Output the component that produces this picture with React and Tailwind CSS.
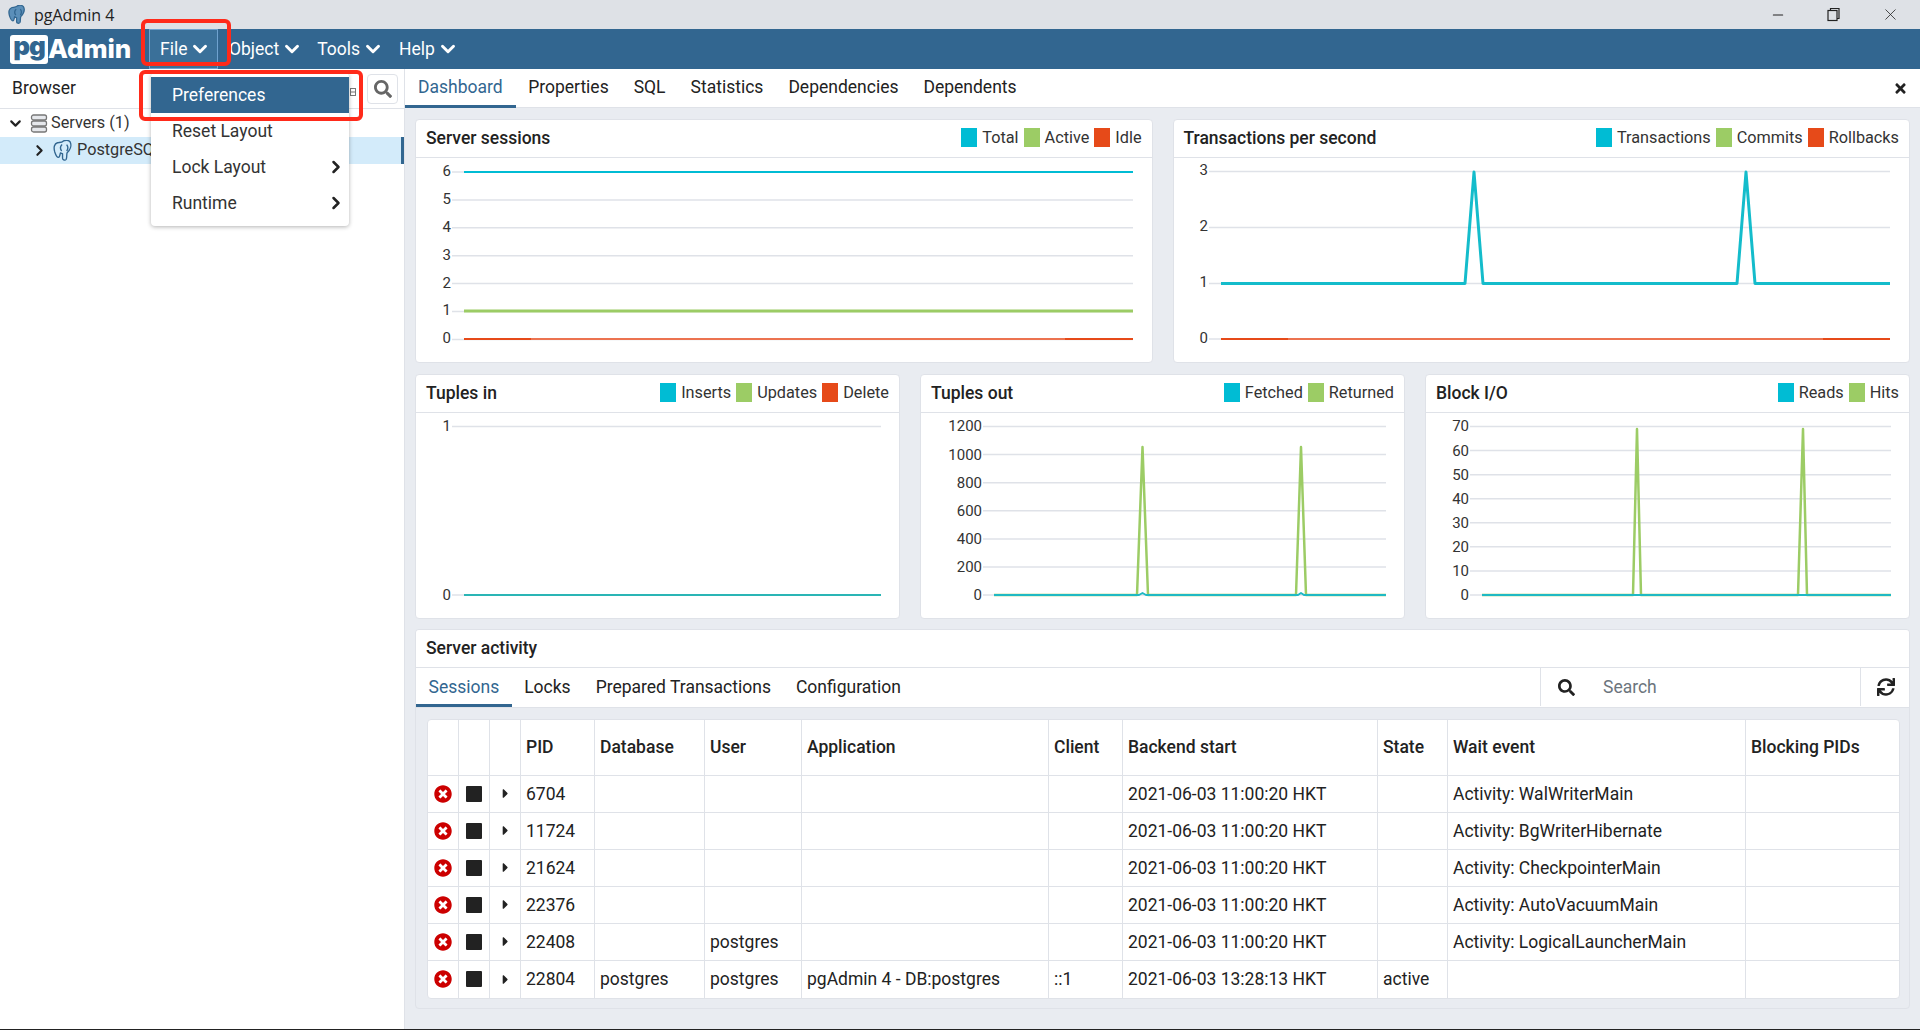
import React from "react";
import { ChevronDown, ChevronRight, Minus, X } from "lucide-react";
import { FaSearch, FaSync, FaTimes, FaTimesCircle, FaCaretRight } from "react-icons/fa";

const TEAL = "#00bcd4";
const GREEN = "#9ccc65";
const RED = "#e64a19";
const RED_SOFT = "#ec7350";

const sessions = [
  { pid: "6704", user: "", db: "", app: "", client: "", start: "2021-06-03 11:00:20 HKT", state: "", wait: "Activity: WalWriterMain" },
  { pid: "11724", user: "", db: "", app: "", client: "", start: "2021-06-03 11:00:20 HKT", state: "", wait: "Activity: BgWriterHibernate" },
  { pid: "21624", user: "", db: "", app: "", client: "", start: "2021-06-03 11:00:20 HKT", state: "", wait: "Activity: CheckpointerMain" },
  { pid: "22376", user: "", db: "", app: "", client: "", start: "2021-06-03 11:00:20 HKT", state: "", wait: "Activity: AutoVacuumMain" },
  { pid: "22408", user: "postgres", db: "", app: "", client: "", start: "2021-06-03 11:00:20 HKT", state: "", wait: "Activity: LogicalLauncherMain" },
  { pid: "22804", user: "postgres", db: "postgres", app: "pgAdmin 4 - DB:postgres", client: "::1", start: "2021-06-03 13:28:13 HKT", state: "active", wait: "" },
];

const columns = ["PID", "Database", "User", "Application", "Client", "Backend start", "State", "Wait event", "Blocking PIDs"];
const colWidths = [31, 31, 31, 74, 110, 97, 247, 74, 255, 70, 298, 153];

const Elephant = ({ className, fill = "none", stroke = "#326690" }) => (
  <svg viewBox="0 0 24 24" className={className} fill={fill} stroke={stroke} strokeWidth="1.5" strokeLinejoin="round">
    <path d="M6 3C2.5 4 1.5 8 3 13c1 3 2 6 4 6 1.6 0 1.6-3 2.2-5 .8.7 1.2 1 2.3 1v5c0 2 3 2.6 4 1 1-2 .2-5 1-7 3-3 5.4-8 3.2-12-2-2-5-2-7.2-1C10.500 3 8 2.500 6 3z" />
    <path d="M11 5c-2 2-2 5-.5 7M16 5c1.500 2 1.500 5 0 7" />
  </svg>
);

// coordinates are page pixels, the viewBox just cuts out the card's chart area
const Chart = ({ x, y, w, h, ticks, gridStart, gridEnd, lines, labelDy = 0 }) => (
  <svg width={w} height={h} viewBox={`${x} ${y} ${w} ${h}`} className="block">
    {ticks.map((t) => (
      <g key={t.label}>
        <line x1={gridStart} x2={gridEnd} y1={t.y} y2={t.y} stroke="#dfe2e8" strokeWidth="1.5" />
        <text x={gridStart - 1} y={t.y + labelDy} textAnchor="end" dominantBaseline="middle" fontSize="15" fill="#333" fontFamily="Roboto, sans-serif">
          {t.label}
        </text>
      </g>
    ))}
    {lines.map((l, i) => (
      <polyline key={i} points={l.points} fill="none" stroke={l.color} strokeWidth={l.width || 2} strokeLinejoin="round" />
    ))}
  </svg>
);

const Card = ({ title, legend, height = "h-[244px]", children }) => (
  <div className={`bg-white rounded border border-[#dfe2e8] overflow-hidden ${height}`}>
    <div className="flex justify-between h-[38px] border-b border-[#dfe2e8] pl-[10px] pr-[10px]">
      <div className="font-medium text-[17.5px] leading-[37px] text-[#222]">{title}</div>
      <div className="flex pt-[8px] gap-[5px]">
        {legend.map((item) => (
          <div key={item.label} className="flex gap-[5px] items-start">
            <span className="w-[16px] h-[19px]" style={{ backgroundColor: item.color }}></span>
            <span className="text-[16.25px] leading-[19px] text-[#333]">{item.label}</span>
          </div>
        ))}
      </div>
    </div>
    {children}
  </div>
);

const NavItem = ({ label, className }) => (
  <div className={`flex items-center gap-0 ${className}`}>
    {label}
    <ChevronDown size={22} strokeWidth={3.2} className="ml-[2px]" />
  </div>
);

const sevenTicks = ["6", "5", "4", "3", "2", "1", "0"].map((label, i) => ({ label, y: 172 + i * 27.9 }));
const tupleTicks = ["1200", "1000", "800", "600", "400", "200", "0"].map((label, i) => ({ label, y: 426.5 + i * 28.1 }));
const blockTicks = ["70", "60", "50", "40", "30", "20", "10", "0"].map((label, i) => ({ label, y: 426.5 + i * 24.07 }));

const App = () => {
  return (
    <div className="relative w-[1920px] h-[1030px] overflow-hidden flex flex-col bg-white text-[#222] font-['Roboto',sans-serif] text-[17.5px]">
      {/* title bar */}
      <div className="h-[29px] shrink-0 bg-[#dee1e6] flex items-center pl-[7px]">
        <Elephant className="w-[20px] h-[20px]" fill="#5b8fb9" stroke="#326690" />
        <span className="ml-[7px] text-[16px] font-['Open_Sans',sans-serif] text-[#222]">pgAdmin 4</span>
        <div className="ml-auto flex items-center text-[#222] pr-[20px] gap-[40px]">
          <Minus size={16} strokeWidth={1.6} />
          <svg width="15" height="15" viewBox="0 0 15 15" fill="none" stroke="#222" strokeWidth="1.2"><rect x="2" y="3.500" width="9" height="10" /><path d="M4.500 3.500V1.500H13V11.500H11" /></svg>
          <X size={19} strokeWidth={1} />
        </div>
      </div>

      {/* nav bar */}
      <div className="h-[40px] shrink-0 bg-[#326690] flex items-stretch text-white">
        <div className="w-[149px] flex items-center pl-[10px]">
          <span className="h-[29px] w-[38px] bg-white rounded-[3px] text-[#326690] font-['Inter',sans-serif] font-black text-[26px] leading-[22px] tracking-[-1px] text-center">pg</span>
          <span className="font-['Inter',sans-serif] font-extrabold text-[26px] tracking-[-0.1px] leading-none">Admin</span>
        </div>
        <NavItem label="File" className="pl-[10px] w-[69px] border border-[#6fa2cf] bg-[#3a7099]" />
        <NavItem label="Object" className="pl-[11px] pr-[3px]" />
        <NavItem label="Tools" className="pl-[11px] pr-[4px]" />
        <NavItem label="Help" className="pl-[11px]" />
      </div>

      <div className="flex-1 flex min-h-0 border-b border-[#222]">
        {/* browser panel */}
        <div className="w-[405px] shrink-0 border-r border-[#dfe2e8]">
          <div className="h-[40px] flex items-center border-b border-[#dfe2e8] pl-[12px] pr-[6px]">
            <span className="text-[17.5px]">Browser</span>
            <svg width="6" height="8" viewBox="0 0 6 8" className="ml-auto mr-[11px] mt-[6px]" fill="none" stroke="#777"><rect x="0.500" y="0.500" width="5" height="7" /><path d="M0 4H6" /></svg>
            <div className="w-[31px] h-[30px] border border-[#dfe2e8] rounded-[4px] flex items-center justify-center">
              <FaSearch size={18} color="#666" />
            </div>
          </div>
          <div className="h-[28px] flex items-center pl-[7px] text-[16.25px] text-[#333]">
            <ChevronDown size={17} strokeWidth={3} color="#222" />
            <svg width="18" height="19" viewBox="0 0 17 19" className="ml-[6px]" fill="#e6e8ec" stroke="#777" strokeWidth="1.3">
              <rect x="1" y="1" width="15" height="5" rx="2" /><rect x="1" y="7" width="15" height="5" rx="2" /><rect x="1" y="13" width="15" height="5" rx="2" />
            </svg>
            <span className="ml-[3px]">Servers (1)</span>
          </div>
          <div className="h-[27px] flex items-center pl-[31px] bg-[#d3ebfa] border-r-[3px] border-[#326690] text-[16.25px] text-[#333]">
            <ChevronRight size={17} strokeWidth={3} color="#222" />
            <Elephant className="w-[22px] h-[22px] ml-[4px]" />
            <span className="ml-[3px]">PostgreSQL 13</span>
          </div>
        </div>

        {/* main panel */}
        <div className="flex-1 min-w-0 flex flex-col bg-[#e9ecf1]">
          <div className="h-[39px] shrink-0 bg-white border-b border-[#dfe2e8] flex">
            <div className="px-[13px] leading-[37px] h-[39px] border-b-[3px] border-[#326690] text-[#326690]">Dashboard</div>
            {["Properties", "SQL", "Statistics", "Dependencies", "Dependents"].map((t) => (
              <div key={t} className="px-[12.5px] leading-[37px]">{t}</div>
            ))}
            <FaTimes size={15} color="#222" className="ml-auto mr-[12px] mt-[12px]" />
          </div>

          <div className="flex-1 flex flex-col pl-[10px] pr-[10px] pt-[11px] gap-[12px]">
            <div className="grid grid-cols-2 gap-[20px]">
              <Card title="Server sessions" legend={[{ label: "Total", color: TEAL }, { label: "Active", color: GREEN }, { label: "Idle", color: RED }]}>
                <Chart x={416} y={158} w={736} h={205} ticks={sevenTicks} gridStart={452} gridEnd={1133} lines={[
                  { points: "464,172 1133,172", color: TEAL },
                  { points: "464,311 1133,311", color: GREEN, width: 3 },
                  { points: "464,339 1133,339", color: RED_SOFT },
                  { points: "464,339 531,339", color: RED },
                  { points: "1065,339 1133,339", color: RED },
                ]} />
              </Card>
              <Card title="Transactions per second" legend={[{ label: "Transactions", color: TEAL }, { label: "Commits", color: GREEN }, { label: "Rollbacks", color: RED }]}>
                <Chart x={1174} y={158} w={735} h={205} gridStart={1209} gridEnd={1890} ticks={[{ label: "3", y: 171.500 }, { label: "2", y: 227.500 }, { label: "1", y: 283.500 }, { label: "0", y: 339 }]} lines={[
                  { points: "1221,339 1890,339", color: RED_SOFT },
                  { points: "1221,339 1288,339", color: RED },
                  { points: "1823,339 1890,339", color: RED },
                  { points: "1221,283.500 1465,283.500 1474,172 1483,283.500 1737,283.500 1746,172 1755,283.500 1890,283.500", color: "#14bccb", width: 3 },
                ]} />
              </Card>
            </div>

            <div className="grid grid-cols-3 gap-[20px] -mt-px">
              <Card height="h-[245px]" title="Tuples in" legend={[{ label: "Inserts", color: TEAL }, { label: "Updates", color: GREEN }, { label: "Delete", color: RED }]}>
                <Chart x={416} y={413} w={483} h={205} labelDy={1} gridStart={452} gridEnd={881} ticks={[{ label: "1", y: 426.500 }, { label: "0", y: 595 }]} lines={[
                  { points: "464,595 881,595", color: "#2ab5b5" },
                ]} />
              </Card>
              <Card height="h-[245px]" title="Tuples out" legend={[{ label: "Fetched", color: TEAL }, { label: "Returned", color: GREEN }]}>
                <Chart x={921} y={413} w={483} h={205} labelDy={1} gridStart={983} gridEnd={1386} ticks={tupleTicks} lines={[
                  { points: "994,595 1137,595 1142.500,447 1148,595 1296,595 1301,447 1306,595 1386,595", color: GREEN, width: 2.5 },
                  { points: "994,595 1139,595 1142.500,593 1146,595 1298,595 1301,593 1304,595 1386,595", color: "#1fb9c4" },
                ]} />
              </Card>
              <Card height="h-[245px]" title="Block I/O" legend={[{ label: "Reads", color: TEAL }, { label: "Hits", color: GREEN }]}>
                <Chart x={1426} y={413} w={483} h={205} labelDy={1} gridStart={1470} gridEnd={1891} ticks={blockTicks} lines={[
                  { points: "1482,595 1633,595 1637,429 1641,595 1798,595 1803,429 1807,595 1891,595", color: GREEN, width: 2.5 },
                  { points: "1482,595 1891,595", color: "#1fb9c4" },
                ]} />
              </Card>
            </div>

            <div className="h-[380px] -mt-[2px] rounded border border-[#dfe2e8] flex flex-col overflow-hidden">
              <div className="h-[38px] shrink-0 bg-white border-b border-[#dfe2e8] pl-[10px] font-medium leading-[37px]">Server activity</div>
              <div className="h-[40px] shrink-0 bg-white border-b border-[#dfe2e8] flex">
                <div className="px-[12.500px] h-[39px] leading-[38px] border-b-[3px] border-[#326690] text-[#326690]">Sessions</div>
                {["Locks", "Prepared Transactions", "Configuration"].map((t) => (
                  <div key={t} className="px-[12.500px] leading-[38px]">{t}</div>
                ))}
                <div className="ml-auto w-[320px] border-l border-[#dfe2e8] flex items-center pl-[17px] h-[38px]">
                  <FaSearch size={17} color="#222" />
                  <span className="ml-[28px] text-[#6c757d] text-[17.500px]">Search</span>
                </div>
                <div className="w-[49px] border-l border-[#dfe2e8] flex items-center justify-center h-[38px] pl-[2px]">
                  <FaSync size={18} color="#222" />
                </div>
              </div>
              <div className="pl-[11px] pt-[11px]">
                <table className="table-fixed border-separate border-spacing-0 bg-white rounded w-[1471px] border border-[#dfe2e8]">
                  <colgroup>
                    {colWidths.map((w, i) => (
                      <col key={i} style={{ width: w }} />
                    ))}
                  </colgroup>
                  <thead>
                    <tr className="h-[56px] font-medium text-left">
                      <th className="border-b border-r border-[#dfe2e8]"></th>
                      <th className="border-b border-r border-[#dfe2e8]"></th>
                      <th className="border-b border-r border-[#dfe2e8]"></th>
                      {columns.map((c, i) => (
                        <th key={c} className={`font-medium pl-[5px] pr-[6px] border-b border-[#dfe2e8] ${i < columns.length - 1 ? "border-r" : ""}`}>{c}</th>
                      ))}
                    </tr>
                  </thead>
                  <tbody>
                    {sessions.map((s, i) => {
                      const b = i < sessions.length - 1 ? "border-b" : "";
                      const cell = `pl-[5px] pr-[6px] border-r border-[#dfe2e8] whitespace-nowrap overflow-hidden ${b}`;
                      return (
                        <tr key={s.pid} className="h-[37px]">
                          <td className={`border-r border-[#dfe2e8] ${b}`}>
                            <FaTimesCircle size={18} color="#cc0000" className="mx-auto -mt-px" />
                          </td>
                          <td className={`border-r border-[#dfe2e8] ${b}`}>
                            <div className="w-[16px] h-[16px] bg-[#222] rounded-[1px] mx-auto -mt-px"></div>
                          </td>
                          <td className={`border-r border-[#dfe2e8] ${b}`}>
                            <FaCaretRight size={15} color="#222" className="mx-auto -mt-px" />
                          </td>
                          <td className={cell}>{s.pid}</td>
                          <td className={cell}>{s.db}</td>
                          <td className={cell}>{s.user}</td>
                          <td className={cell}>{s.app}</td>
                          <td className={cell}>{s.client}</td>
                          <td className={cell}>{s.start}</td>
                          <td className={cell}>{s.state}</td>
                          <td className={cell}>{s.wait}</td>
                          <td className={`border-[#dfe2e8] ${b}`}></td>
                        </tr>
                      );
                    })}
                  </tbody>
                </table>
              </div>
            </div>
          </div>
        </div>
      </div>

      {/* File menu, open */}
      <div className="absolute left-[151px] top-[73px] w-[198px] h-[153px] bg-white rounded-[4px] shadow-[0_1px_4px_rgba(0,0,0,0.3)] pt-[4px] text-[#333]">
        <div className="h-[36px] bg-[#326690] text-white pl-[21px] leading-[36px]">Preferences</div>
        <div className="h-[36px] pl-[21px] leading-[36px]">Reset Layout</div>
        <div className="h-[36px] pl-[21px] pr-[3px] flex items-center justify-between">Lock Layout <ChevronRight size={20} strokeWidth={3} color="#222" /></div>
        <div className="h-[36px] pl-[21px] pr-[3px] flex items-center justify-between">Runtime <ChevronRight size={20} strokeWidth={3} color="#222" /></div>
      </div>

      {/* red highlight boxes drawn on the screenshot */}
      <div className="absolute left-[141px] top-[19px] w-[90px] h-[47px] border-[4px] border-[#ff2a1a] rounded-[6px]"></div>
      <div className="absolute left-[139px] top-[70px] w-[224px] h-[51px] border-[4px] border-[#ff2a1a] rounded-[6px]"></div>
    </div>
  );
};

export default App;
